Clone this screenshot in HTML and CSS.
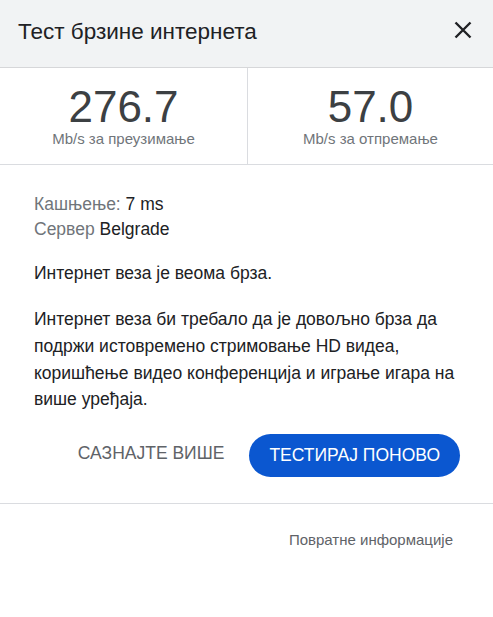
FILE: index.html
```html
<!DOCTYPE html>
<html lang="sr">
<head>
<meta charset="utf-8">
<title>Тест брзине интернета</title>
<link rel="stylesheet" href="styles.css">
</head>
<body>
<div class="panel">
  <header class="panel-head">
    <h1 class="panel-title">Тест брзине интернета</h1>
    <button class="close-btn" aria-label="Затвори">
      <svg width="18" height="18" viewBox="0 0 18 18" aria-hidden="true">
        <path d="M1.5 1.5 L16.5 16.5 M16.5 1.5 L1.5 16.5" stroke="#202124" stroke-width="2.4" fill="none"/>
      </svg>
    </button>
  </header>

  <section class="stats">
    <div class="stat">
      <div class="stat-value">276.7</div>
      <div class="stat-label">Mb/s за преузимање</div>
    </div>
    <div class="stat">
      <div class="stat-value">57.0</div>
      <div class="stat-label">Mb/s за отпремање</div>
    </div>
  </section>

  <section class="details">
    <div class="info">
      <div class="info-row"><span class="info-key">Кашњење:</span> 7 ms</div>
      <div class="info-row"><span class="info-key">Сервер</span> Belgrade</div>
    </div>
    <p class="summary">Интернет веза је веома брза.</p>
    <p class="summary">Интернет веза би требало да је довољно брза да подржи истовремено стримовање HD видеа, коришћење видео конференција и играње игара на више уређаја.</p>
    <div class="actions">
      <button class="btn-text">САЗНАЈТЕ ВИШЕ</button>
      <button class="btn-primary">ТЕСТИРАЈ ПОНОВО</button>
    </div>
  </section>

  <footer class="panel-foot">
    <a class="feedback" href="#">Повратне информације</a>
  </footer>
</div>
</body>
</html>
```

FILE: styles.css
```css
html, body {
  margin: 0;
  padding: 0;
  background: #ffffff;
}

body {
  font-family: "Liberation Sans", Arial, sans-serif;
  color: #202124;
}

.panel {
  width: 493px;
}

/* Title bar */
.panel-head {
  height: 67px;
  background: #f1f3f4;
  border-bottom: 1px solid #d6d7d9;
  display: flex;
  align-items: center;
  justify-content: space-between;
  padding: 0 21px 0 18px;
  box-sizing: content-box;
}

.panel-title {
  margin: 0;
  font-size: 22.5px;
  font-weight: normal;
  color: #202124;
  position: relative;
  top: -2px;
}

.close-btn {
  border: 0;
  background: none;
  padding: 0;
  width: 18px;
  height: 18px;
  display: flex;
  cursor: pointer;
  position: relative;
  top: -4px;
}

/* Download / upload figures */
.stats {
  display: grid;
  grid-template-columns: 247px 1fr;
  border-bottom: 1px solid #dadce0;
}

.stat {
  display: flex;
  flex-direction: column;
  align-items: center;
  padding: 15px 0 17px;
}

.stat + .stat {
  border-left: 1px solid #dadce0;
}

.stat-value {
  font-size: 44px;
  line-height: 48px;
  color: #3c4043;
}

.stat-label {
  font-size: 15px;
  line-height: 16px;
  color: #70757a;
}

/* Result details */
.details {
  padding: 27px 33px 26px 34px;
  border-bottom: 1px solid #dadce0;
  font-size: 17.5px;
}

.info-row {
  line-height: 25px;
}

.info-key {
  color: #70757a;
}

.summary {
  margin: 18px 0 0;
  line-height: 26.67px;
}

.summary + .summary {
  margin-top: 19.5px;
}

.actions {
  display: flex;
  justify-content: flex-end;
  align-items: center;
  gap: 25px;
  margin-top: 21px;
}

.btn-text {
  border: 0;
  background: none;
  padding: 0;
  font-family: inherit;
  font-size: 17.5px;
  color: #5f6368;
  position: relative;
  top: -2px;
}

.btn-primary {
  border: 0;
  height: 43px;
  padding: 0 20px;
  border-radius: 22px;
  background: #0b57d0;
  color: #ffffff;
  font-family: inherit;
  font-size: 17.5px;
}

/* Footer link */
.panel-foot {
  display: flex;
  justify-content: flex-end;
  padding: 27px 40px 0 0;
}

.feedback {
  font-size: 15px;
  color: #5f6368;
  text-decoration: none;
}
```
